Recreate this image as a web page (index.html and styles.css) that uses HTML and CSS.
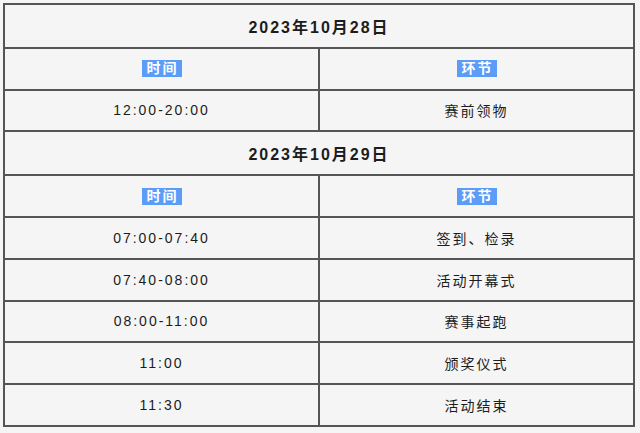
FILE: index.html
```html
<!DOCTYPE html>
<html lang="zh">
<head>
<meta charset="utf-8">
<link rel="stylesheet" href="styles.css">
</head>
<body>
<table class="schedule">
  <tr class="day"><td colspan="2">2023年10月28日</td></tr>
  <tr class="head"><td><span class="tag">时间</span></td><td><span class="tag">环节</span></td></tr>
  <tr><td>12:00-20:00</td><td>赛前领物</td></tr>
  <tr class="day"><td colspan="2">2023年10月29日</td></tr>
  <tr class="head"><td><span class="tag">时间</span></td><td><span class="tag">环节</span></td></tr>
  <tr><td>07:00-07:40</td><td>签到、检录</td></tr>
  <tr><td>07:40-08:00</td><td>活动开幕式</td></tr>
  <tr><td>08:00-11:00</td><td>赛事起跑</td></tr>
  <tr><td>11:00</td><td>颁奖仪式</td></tr>
  <tr><td>11:30</td><td>活动结束</td></tr>
</table>
</body>
</html>
```

FILE: styles.css
```css
html, body {
  background: #f5f5f5;
}
body {
  margin: 3px;
  font-family: "Liberation Sans", "Noto Sans CJK SC", sans-serif;
  color: #1c1c1c;
}
.schedule {
  width: 632px;
  border-collapse: collapse;
  border: 2px solid #555;
  table-layout: fixed;
}
.schedule td {
  border: 2px solid #555;
  height: 39.8px;
  padding: 0;
  text-align: center;
  vertical-align: middle;
  font-size: 14px;
  letter-spacing: 2px;
}
.schedule .day td {
  height: 41.8px;
  font-size: 16px;
  font-weight: bold;
}
.tag {
  display: inline-block;
  background: #5b9cf8;
  color: #fff;
  font-weight: bold;
  line-height: 17px;
  padding: 0 3px 0 5px;
}
```
